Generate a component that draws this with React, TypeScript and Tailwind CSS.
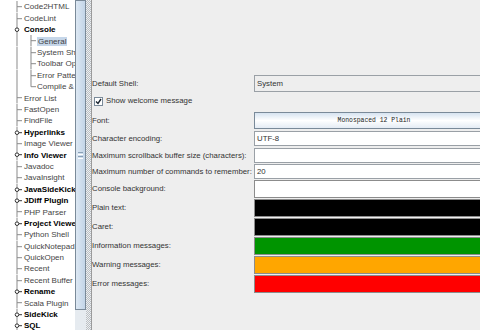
type Node = { label: string; level: 1 | 2; kind: 'leaf' | 'open' | 'closed'; last?: boolean; selected?: boolean };

const tree: Node[] = [
  { label: 'Code2HTML', level: 1, kind: 'leaf' },
  { label: 'CodeLint', level: 1, kind: 'leaf' },
  { label: 'Console', level: 1, kind: 'open' },
  { label: 'General', level: 2, kind: 'leaf', selected: true },
  { label: 'System Shell', level: 2, kind: 'leaf' },
  { label: 'Toolbar Options', level: 2, kind: 'leaf' },
  { label: 'Error Patterns', level: 2, kind: 'leaf' },
  { label: 'Compile & Run', level: 2, kind: 'leaf', last: true },
  { label: 'Error List', level: 1, kind: 'leaf' },
  { label: 'FastOpen', level: 1, kind: 'leaf' },
  { label: 'FindFile', level: 1, kind: 'leaf' },
  { label: 'Hyperlinks', level: 1, kind: 'closed' },
  { label: 'Image Viewer', level: 1, kind: 'leaf' },
  { label: 'Info Viewer', level: 1, kind: 'closed' },
  { label: 'Javadoc', level: 1, kind: 'leaf' },
  { label: 'JavaInsight', level: 1, kind: 'leaf' },
  { label: 'JavaSideKick', level: 1, kind: 'closed' },
  { label: 'JDiff Plugin', level: 1, kind: 'closed' },
  { label: 'PHP Parser', level: 1, kind: 'leaf' },
  { label: 'Project Viewer', level: 1, kind: 'closed' },
  { label: 'Python Shell', level: 1, kind: 'leaf' },
  { label: 'QuickNotepad', level: 1, kind: 'leaf' },
  { label: 'QuickOpen', level: 1, kind: 'leaf' },
  { label: 'Recent', level: 1, kind: 'leaf' },
  { label: 'Recent Buffer Switcher', level: 1, kind: 'leaf' },
  { label: 'Rename', level: 1, kind: 'closed' },
  { label: 'Scala Plugin', level: 1, kind: 'leaf' },
  { label: 'SideKick', level: 1, kind: 'closed' },
  { label: 'SQL', level: 1, kind: 'closed' },
];

function TreeLines({ node }: { node: Node }) {
  const c = 5.7;
  return (
    <svg width="37" height="11.4" viewBox="0 0 37 11.4" className="shrink-0">
      <line x1="17" y1="0" x2="17" y2="11.4" stroke="#8a8a8a" strokeWidth="1" />
      {node.level === 1 && node.kind === 'leaf' && (
        <line x1="17" y1={c} x2="22" y2={c} stroke="#8a8a8a" strokeWidth="1" />
      )}
      {node.level === 1 && node.kind !== 'leaf' && (
        <>
          <circle cx="17" cy={c} r="1.8" fill="#fff" stroke="#333" strokeWidth="1" />
          {node.kind === 'closed' ? (
            <line x1="19" y1={c} x2="22" y2={c} stroke="#333" strokeWidth="1" />
          ) : null}
        </>
      )}
      {node.level === 2 && (
        <>
          <line x1="31" y1="0" x2="31" y2={node.last ? c : 11.4} stroke="#8a8a8a" strokeWidth="1" />
          <line x1="31" y1={c} x2="36" y2={c} stroke="#8a8a8a" strokeWidth="1" />
        </>
      )}
    </svg>
  );
}

function TreeRow({ node }: { node: Node }) {
  const textLeft = node.level === 1 ? 'ml-[-13px]' : 'ml-0';
  return (
    <div className="flex h-[11.4px] items-center whitespace-nowrap">
      <TreeLines node={node} />
      <span
        className={`${textLeft} leading-[9px] ${
          node.kind === 'leaf' ? 'text-[#444]' : 'font-bold text-black'
        } ${node.selected ? 'bg-[#c5d6e9] px-[1px] -ml-[1px]' : ''}`}
      >
        {node.label}
      </span>
    </div>
  );
}

function Field({ children, className = '' }: { children?: React.ReactNode; className?: string }) {
  return (
    <div className={`flex items-center border border-[#9aa0a6] pl-[2px] ${className}`}>{children}</div>
  );
}

const colours = [
  ['Console background:', 'bg-white'],
  ['Plain text:', 'bg-black'],
  ['Caret:', 'bg-black'],
  ['Information messages:', 'bg-[#009400]'],
  ['Warning messages:', 'bg-[#ffa600]'],
  ['Error messages:', 'bg-[#ff0000]'],
];

export default function App() {
  return (
    <div className="flex h-[330px] w-[480px] overflow-hidden bg-[#eeeeee] font-['Liberation_Sans',Arial,sans-serif] text-[7.8px] text-[#333]">
      <div className="w-[75px] shrink-0 overflow-hidden bg-white pt-[1.3px] text-[8px]">
        {tree.map((n) => (
          <TreeRow key={n.label} node={n} />
        ))}
      </div>

      <div className="flex w-[11px] shrink-0 flex-col bg-[#e6ebf0]">
        <div className="flex h-[310px] items-center justify-center border border-[#7a8a99] bg-gradient-to-r from-[#dde8f3] to-[#c3d5e8]">
          <div className="flex flex-col gap-[1px]">
            <div className="h-[1px] w-[5px] bg-[#8aa0b6]" />
            <div className="h-[1px] w-[5px] bg-white" />
            <div className="h-[1px] w-[5px] bg-[#8aa0b6]" />
            <div className="h-[1px] w-[5px] bg-white" />
          </div>
        </div>
      </div>

      <div className="w-[6px] shrink-0 border-r border-[#9a9a9a] bg-[repeating-conic-gradient(#b8bfc6_0_25%,#eeeeee_0_50%)] bg-[length:2px_2px]" />

      <div className="w-[402px] shrink-0 pt-[75px]">
        <div className="flex h-[17px] items-center">
          <span className="w-[162px] shrink-0">Default Shell:</span>
          <Field className="h-full w-[240px] bg-[#eeeeee]">System</Field>
        </div>

        <div className="flex h-[18px] items-center gap-[3px] pl-[2px]">
          <span className="flex h-[9px] w-[9px] items-center justify-center border border-[#7a8a99] bg-white">
            <svg width="7" height="7" viewBox="0 0 7 7">
              <path d="M1 3.5 L3 5.5 L6 1" fill="none" stroke="#1a2430" strokeWidth="1.4" />
            </svg>
          </span>
          <span>Show welcome message</span>
        </div>

        <div className="mt-[2px] flex h-[17px] items-center">
          <span className="w-[162px] shrink-0">Font:</span>
          <div className="flex h-full w-[240px] items-center justify-center border border-[#7a8a99] bg-gradient-to-b from-[#d6e3f0] via-white to-[#e4ecf4] font-['Liberation_Mono',monospace] text-[6.4px] text-[#222]">
            Monospaced 12 Plain
          </div>
        </div>

        <div className="mt-[2px] flex h-[15px] items-center">
          <span className="w-[162px] shrink-0">Character encoding:</span>
          <Field className="h-full w-[240px] bg-white">UTF-8</Field>
        </div>

        <div className="mt-[2px] flex h-[15px] items-center">
          <span className="w-[162px] shrink-0">Maximum scrollback buffer size (characters):</span>
          <Field className="h-full w-[240px] bg-white" />
        </div>

        <div className="mt-[1px] flex h-[15px] items-center">
          <span className="w-[162px] shrink-0 whitespace-nowrap">Maximum number of commands to remember:</span>
          <Field className="h-full w-[240px] bg-white">20</Field>
        </div>

        {colours.map(([label, bg]) => (
          <div key={label} className="mt-[1px] flex h-[18px] items-center">
            <span className="w-[162px] shrink-0">{label}</span>
            <div className={`h-full w-[240px] border border-[#8c8c8c] ${bg}`} />
          </div>
        ))}
      </div>
    </div>
  );
}
